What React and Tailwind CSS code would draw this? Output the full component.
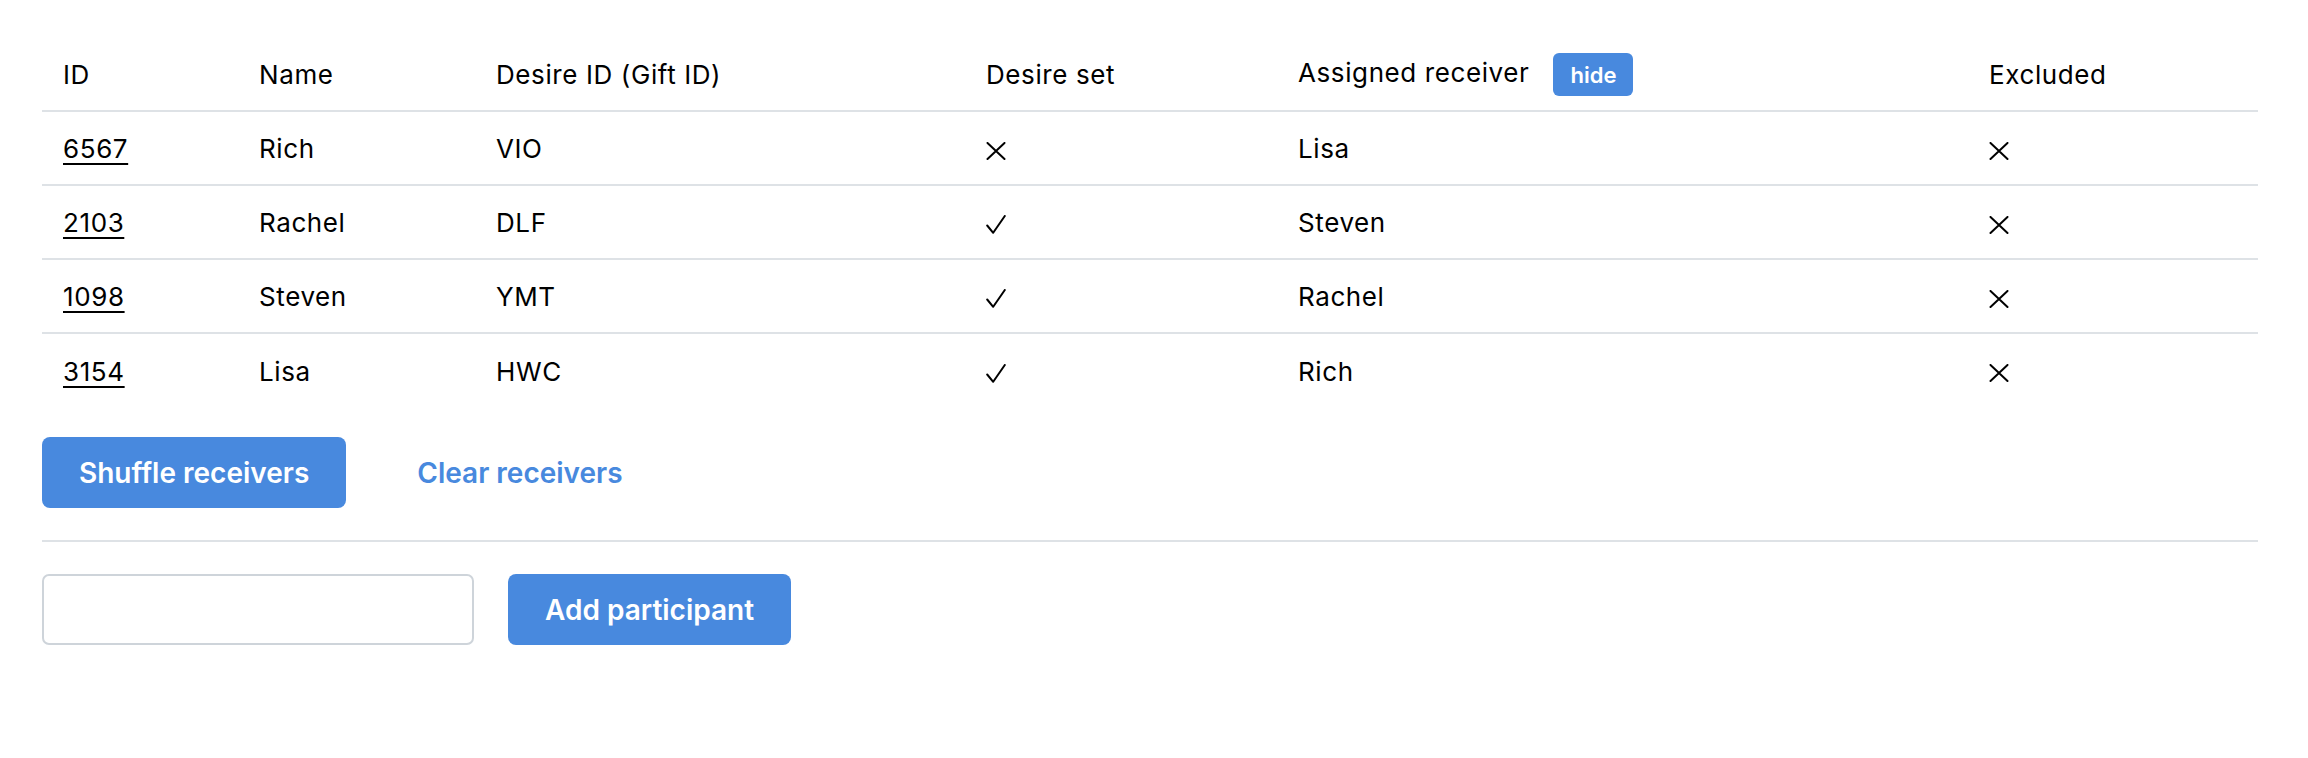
import React from "react";

const rows = [
  { id: "6567", name: "Rich", desire: "VIO", set: false, receiver: "Lisa", excluded: false },
  { id: "2103", name: "Rachel", desire: "DLF", set: true, receiver: "Steven", excluded: false },
  { id: "1098", name: "Steven", desire: "YMT", set: true, receiver: "Rachel", excluded: false },
  { id: "3154", name: "Lisa", desire: "HWC", set: true, receiver: "Rich", excluded: false },
];

function Cross() {
  return (
    <svg width="20" height="18" viewBox="0 0 20 18" className="inline-block align-middle">
      <path d="M1.5 1 L18.5 17 M18.5 1 L1.5 17" stroke="#000" strokeWidth="2" fill="none" strokeLinecap="round" />
    </svg>
  );
}

function Check() {
  return (
    <svg width="20" height="19" viewBox="0 0 20 19" className="inline-block align-middle">
      <path d="M1.2 10.5 L7.2 17.8 L18.8 1" stroke="#000" strokeWidth="2" fill="none" strokeLinecap="round" strokeLinejoin="round" />
    </svg>
  );
}

export default function App() {
  const font = { fontFamily: "Inter, 'Noto Sans', 'Liberation Sans', sans-serif" };
  return (
    <div className="min-h-[758px] w-full bg-white text-black" style={font}>
      <div className="pl-[42px] pr-[50px] pt-[37px]">
        <table className="w-full table-fixed border-collapse text-[26px] leading-[36px] tracking-[0.6px]">
          <colgroup>
            <col className="w-[196px]" />
            <col className="w-[237px]" />
            <col className="w-[490px]" />
            <col className="w-[312px]" />
            <col className="w-[691px]" />
            <col />
          </colgroup>
          <thead>
            <tr className="border-b-2 border-[#dee2e6]">
              <th className="h-[74px] px-[21px] pt-[2px] text-left font-normal align-middle">ID</th>
              <th className="h-[74px] px-[21px] pt-[2px] text-left font-normal align-middle">Name</th>
              <th className="h-[74px] px-[21px] pt-[2px] text-left font-normal align-middle">Desire ID (Gift ID)</th>
              <th className="h-[74px] px-[21px] pt-[2px] text-left font-normal align-middle">Desire set</th>
              <th className="h-[74px] px-[21px] pt-[2px] text-left font-normal align-middle">
                <div className="flex items-center gap-[24px]">
                  <span className="-mt-[3px]">Assigned receiver</span>
                  <button className="flex h-[43px] items-center rounded-[6px] bg-[#4889de] px-[17px] text-[22px] font-semibold leading-none tracking-normal text-white">
                    hide
                  </button>
                </div>
              </th>
              <th className="h-[74px] px-[21px] pt-[2px] text-left font-normal align-middle">Excluded</th>
            </tr>
          </thead>
          <tbody>
            {rows.map((r, i) => (
              <tr key={r.id} className={i < rows.length - 1 ? "border-b-2 border-[#dee2e6]" : ""}>
                <td className="h-[74px] px-[21px] pt-[2px] align-middle">
                  <a className="underline decoration-2 underline-offset-[5px]">{r.id}</a>
                </td>
                <td className="h-[74px] px-[21px] pt-[2px] align-middle">{r.name}</td>
                <td className="h-[74px] px-[21px] pt-[2px] align-middle">{r.desire}</td>
                <td className="h-[74px] px-[21px] pt-[2px] align-middle">{r.set ? <Check /> : <Cross />}</td>
                <td className="h-[74px] px-[21px] pt-[2px] align-middle">{r.receiver}</td>
                <td className="h-[74px] px-[21px] pt-[2px] align-middle">{r.excluded ? <Check /> : <Cross />}</td>
              </tr>
            ))}
          </tbody>
        </table>

        <div className="mt-[30px] flex items-center gap-[34px]">
          <button className="h-[71px] rounded-[8px] bg-[#4889de] px-[37px] text-[28px] font-semibold text-white">
            Shuffle receivers
          </button>
          <button className="h-[71px] px-[37px] text-[28px] font-semibold text-[#4889de]">
            Clear receivers
          </button>
        </div>

        <div className="mt-[32px] h-[2px] w-full bg-[#dee2e6]" />

        <div className="mt-[32px] flex items-center gap-[34px]">
          <input className="h-[71px] w-[432px] rounded-[7px] border-2 border-[#ced4da] bg-white px-[18px] text-[24px] outline-none" />
          <button className="h-[71px] rounded-[8px] bg-[#4889de] px-[37px] text-[28px] font-semibold text-white">
            Add participant
          </button>
        </div>
      </div>
    </div>
  );
}
